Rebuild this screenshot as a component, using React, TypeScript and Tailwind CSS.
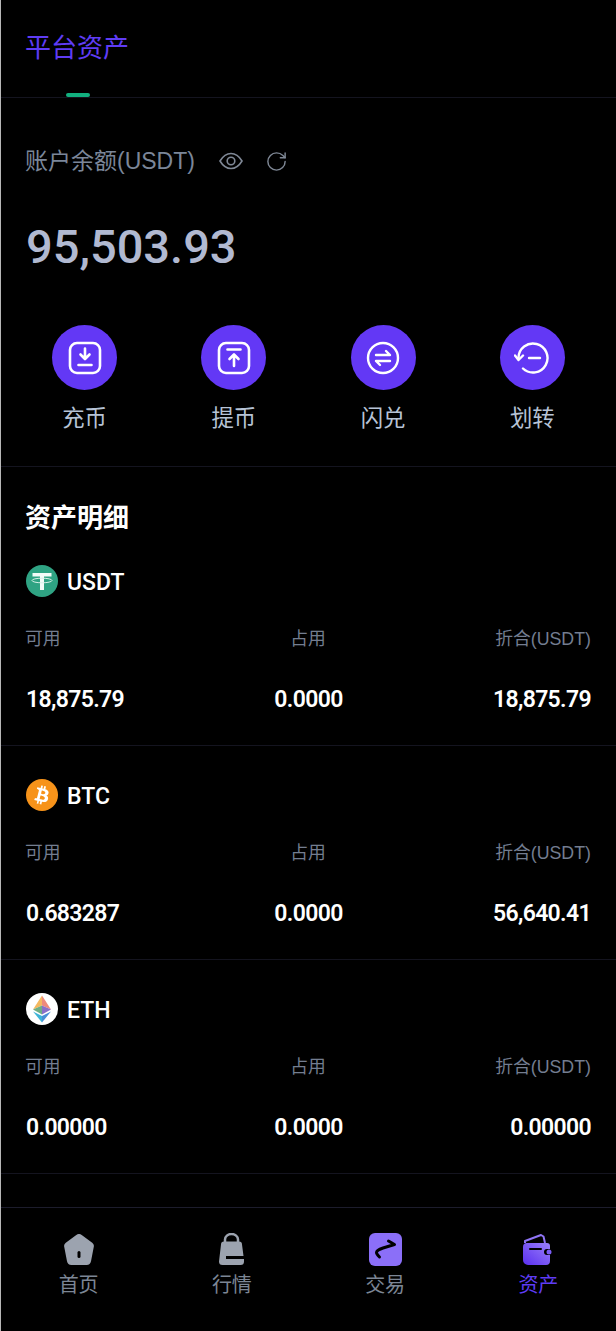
import { RotateCw } from "lucide-react";

const FONT = "font-['Liberation_Sans','Noto_Sans_CJK_SC',sans-serif]";
const NUM = "font-['Roboto','Noto_Sans_CJK_SC',sans-serif]";

function DepositIcon() {
  return (
    <svg width="34" height="34" viewBox="0 0 34 34" fill="none" stroke="#fff" strokeWidth="2.6" strokeLinecap="round" strokeLinejoin="round">
      <rect x="2" y="2" width="30" height="30" rx="7" />
      <path d="M17 7.500v10M12.500 13.500l4.500 4.500 4.500-4.500M10.500 24h13" />
    </svg>
  );
}

function WithdrawIcon() {
  return (
    <svg width="34" height="34" viewBox="0 0 34 34" fill="none" stroke="#fff" strokeWidth="2.6" strokeLinecap="round" strokeLinejoin="round">
      <rect x="2" y="2" width="30" height="30" rx="7" />
      <path d="M10.500 8.500h13M17 25V13.500M12.500 18l4.500-4.500 4.500 4.500" />
    </svg>
  );
}

function SwapIcon() {
  return (
    <svg width="34" height="34" viewBox="0 0 34 34" fill="none" stroke="#fff" strokeWidth="2.4" strokeLinecap="round" strokeLinejoin="round">
      <circle cx="17" cy="17" r="15" />
      <path d="M10 14h14l-4-4M24 20H10l4 4" />
    </svg>
  );
}

function TransferIcon() {
  return (
    <svg width="36" height="34" viewBox="0 0 36 34" fill="none" stroke="#fff" strokeWidth="2.4" strokeLinecap="round" strokeLinejoin="round">
      <path d="M4.500 17A14.500 14.500 0 1 1 9 27.500" />
      <path d="M1 14.500l3.500 4.500 4.500-4.500" />
      <path d="M15 17h11" />
    </svg>
  );
}

function EyeIcon() {
  return (
    <svg width="24" height="18" viewBox="0 0 24 18" fill="none" stroke="#7f8896" strokeWidth="1.600">
      <path d="M1 9c3-5 6.500-7.500 11-7.500S20 4 23 9c-3 5-6.500 7.500-11 7.500S4 14 1 9z" />
      <circle cx="12" cy="9" r="3.800" />
    </svg>
  );
}

function UsdtLogo() {
  return (
    <svg width="32" height="32" viewBox="0 0 32 32">
      <circle cx="16" cy="16" r="16" fill="#2fa383" />
      <rect x="6.500" y="8" width="19" height="3.500" fill="#f4fbf8" />
      <rect x="14" y="8" width="4" height="17" fill="#f4fbf8" />
      <ellipse cx="16" cy="15.500" rx="10" ry="2.300" fill="none" stroke="#d8f0e8" strokeWidth="1" />
    </svg>
  );
}

function BtcLogo() {
  return (
    <svg width="32" height="32" viewBox="0 0 32 32">
      <circle cx="16" cy="16" r="16" fill="#f7931a" />
      <path d="M22.600 14c.3-2-1.200-3.100-3.300-3.800l.7-2.700-1.700-.4-.7 2.600-1.300-.3.700-2.600-1.700-.4-.7 2.700-3.300-.8-.4 1.800s1.200.3 1.200.3c.7.200.8.600.8 1l-1.900 7.500c-.1.200-.3.500-.8.400 0 0-1.200-.3-1.200-.3l-.8 1.900 3.200.8-.7 2.700 1.600.4.700-2.700 1.300.3-.7 2.700 1.700.4.700-2.700c2.900.5 5 .3 5.900-2.300.7-2.100 0-3.300-1.500-4.100 1.100-.2 1.900-1 2.100-2.400zm-3.800 5.400c-.5 2.100-4 1-5.200.7l.9-3.700c1.200.3 4.800.9 4.300 3zm.5-5.400c-.5 1.900-3.400.9-4.300.7l.8-3.300c1 .2 4 .7 3.500 2.600z" fill="#fff" />
    </svg>
  );
}

function EthLogo() {
  return (
    <svg width="32" height="32" viewBox="0 0 32 32">
      <circle cx="16" cy="16" r="16" fill="#fff" />
      <path d="M16 2.500L7 16.500l9-4z" fill="#f4b860" />
      <path d="M16 2.500l9 14-9-4z" fill="#ee8a7d" />
      <path d="M7 16.500l9-4v9z" fill="#6fae84" />
      <path d="M25 16.500l-9-4v9z" fill="#8a70c8" />
      <path d="M7 18.500l9 11v-6.500z" fill="#3db4d8" />
      <path d="M25 18.500l-9 11v-6.500z" fill="#4a8fd6" />
    </svg>
  );
}

function HomeIcon() {
  return (
    <svg width="30" height="31" viewBox="0 0 30 31">
      <path d="M12.300 1a4.500 4.500 0 0 1 5.400 0l10.500 7.700a4 4 0 0 1 1.600 4.100l-2.800 14.500a4.500 4.500 0 0 1-4.400 3.700H7.400a4.500 4.500 0 0 1-4.400-3.700L.2 12.800a4 4 0 0 1 1.600-4.100z" fill="#9ca3af" />
      <rect x="13.500" y="17" width="3" height="7" rx="1.500" fill="#000" />
    </svg>
  );
}

function MarketIcon() {
  return (
    <svg width="25" height="32" viewBox="0 0 25 32">
      <path d="M6 10V6.500a6.500 5.500 0 0 1 13 0V10" fill="none" stroke="#9ca3af" strokeWidth="2.500" />
      <path d="M5 8.500h15a3 3 0 0 1 3 3L24.500 23H7v3h18v2.500a3.500 3.500 0 0 1-3.500 3.500h-18A3.500 3.500 0 0 1 0 28.500l2-17a3 3 0 0 1 3-3z" fill="#9ca3af" />
    </svg>
  );
}

function TradeIcon() {
  return (
    <svg width="33" height="33" viewBox="0 0 33 33">
      <rect width="33" height="33" rx="6" fill="#8b6ff8" />
      <path d="M19.500 8l6 3.500-11.500 3.500c-3 1-6.500 3-6.500 4.500 0 1 1.500 3 3 4.500" fill="none" stroke="#000" strokeWidth="3" strokeLinecap="round" strokeLinejoin="round" />
    </svg>
  );
}

function WalletIcon() {
  return (
    <svg width="30" height="31" viewBox="0 0 30 31">
      <defs>
        <linearGradient id="walletFill" x1="1" y1="0" x2="0" y2="1">
          <stop offset="0" stopColor="#9a80f8" />
          <stop offset="1" stopColor="#5a2ff0" />
        </linearGradient>
      </defs>
      <path d="M2 9V7l16-6 2.500 1.500L22 9" fill="none" stroke="#8f74f5" strokeWidth="2" strokeLinejoin="round" />
      <path d="M4 9h20a3 3 0 0 1 3 3v3h-3a3 3 0 0 0 0 6h3v6a4 4 0 0 1-4 4H5a5 5 0 0 1-5-5V13a4 4 0 0 1 4-4z" fill="url(#walletFill)" />
      <path d="M7 15h11" stroke="#000" strokeWidth="2" strokeLinecap="round" />
      <circle cx="26" cy="18" r="2.500" fill="#7a5cf5" />
    </svg>
  );
}

const actions = [
  { label: "充币", icon: <DepositIcon /> },
  { label: "提币", icon: <WithdrawIcon /> },
  { label: "闪兑", icon: <SwapIcon /> },
  { label: "划转", icon: <TransferIcon /> },
];

const assets = [
  { name: "USDT", logo: <UsdtLogo />, free: "18,875.79", used: "0.0000", total: "18,875.79" },
  { name: "BTC", logo: <BtcLogo />, free: "0.683287", used: "0.0000", total: "56,640.41" },
  { name: "ETH", logo: <EthLogo />, free: "0.00000", used: "0.0000", total: "0.00000" },
];

const tabs = [
  { label: "首页", icon: <HomeIcon />, active: false },
  { label: "行情", icon: <MarketIcon />, active: false },
  { label: "交易", icon: <TradeIcon />, active: false },
  { label: "资产", icon: <WalletIcon />, active: true },
];

export default function App() {
  return (
    <div className={`w-[616px] h-[1331px] bg-black flex flex-col border-l border-[#b8b8b8] overflow-hidden ${FONT}`}>
      <header className="relative h-[98px] shrink-0 border-b border-[#14141f] pl-[24px] pt-[30px]">
        <h1 className="text-[26px] leading-[36px] font-normal text-[#5f3cf5]">平台资产</h1>
        <div className="absolute left-[65px] bottom-0 w-[24px] h-[4px] rounded-full bg-[#12b07f]" />
      </header>

      <section className="pl-[25px] pt-[46px]">
        <div className="flex items-center h-[34px] -ml-[1px]">
          <span className="text-[23px] leading-[34px] text-[#7b8699]">账户余额(USDT)</span>
          <span className="ml-[24px]"><EyeIcon /></span>
          <RotateCw className="ml-[22px] text-[#7f8896]" size={23} strokeWidth={1.5} />
        </div>
        <div className={`mt-[41px] text-[47px] leading-[56px] font-medium text-[#b1b9d1] ${NUM}`}>95,503.93</div>
      </section>

      <section className="grid grid-cols-4 h-[192px] shrink-0 px-[9px] pt-[50px] border-b border-[#14141f]">
        {actions.map((a) => (
          <div key={a.label} className="flex flex-col items-center">
            <div className="w-[65px] h-[65px] rounded-full bg-[#6338f5] flex items-center justify-center">{a.icon}</div>
            <span className="mt-[13px] text-[22.400px] leading-[32px] text-[#b6c3d6]">{a.label}</span>
          </div>
        ))}
      </section>

      <h2 className="pl-[24px] pt-[37px] text-[26px] leading-[28px] font-bold text-white">资产明细</h2>

      {assets.map((a) => (
        <section key={a.name} className="h-[214px] shrink-0 pr-[25px] pl-[25px] pt-[32px] border-b border-[#14141f]">
          <div className="flex items-center gap-[9px] h-[34px]">
            {a.logo}
            <span className={`pt-[4px] text-[23px] leading-[30px] font-medium text-white ${NUM}`}>{a.name}</span>
          </div>
          <div className="grid grid-cols-3 mt-[27px] -ml-[1px] text-[17.800px] leading-[28px] text-[#737d90]">
            <span>可用</span>
            <span className="text-center">占用</span>
            <span className="text-right">折合(USDT)</span>
          </div>
          <div className={`grid grid-cols-3 mt-[31px] text-[23px] leading-[32px] font-semibold tracking-[-0.65px] text-white ${NUM}`}>
            <span>{a.free}</span>
            <span className="text-center">{a.used}</span>
            <span className="text-right">{a.total}</span>
          </div>
        </section>
      ))}

      <nav className="mt-[33px] flex-1 grid grid-cols-4 border-t border-[#1c1c2c] px-[1px] pt-[24px]">
        {tabs.map((t) => (
          <div key={t.label} className="flex flex-col items-center">
            <div className="h-[34px] flex items-center justify-center">{t.icon}</div>
            <span className={`mt-[4px] text-[20px] leading-[30px] ${t.active ? "text-[#5f3cf5]" : "text-[#7c8695]"}`}>{t.label}</span>
          </div>
        ))}
      </nav>
    </div>
  );
}
